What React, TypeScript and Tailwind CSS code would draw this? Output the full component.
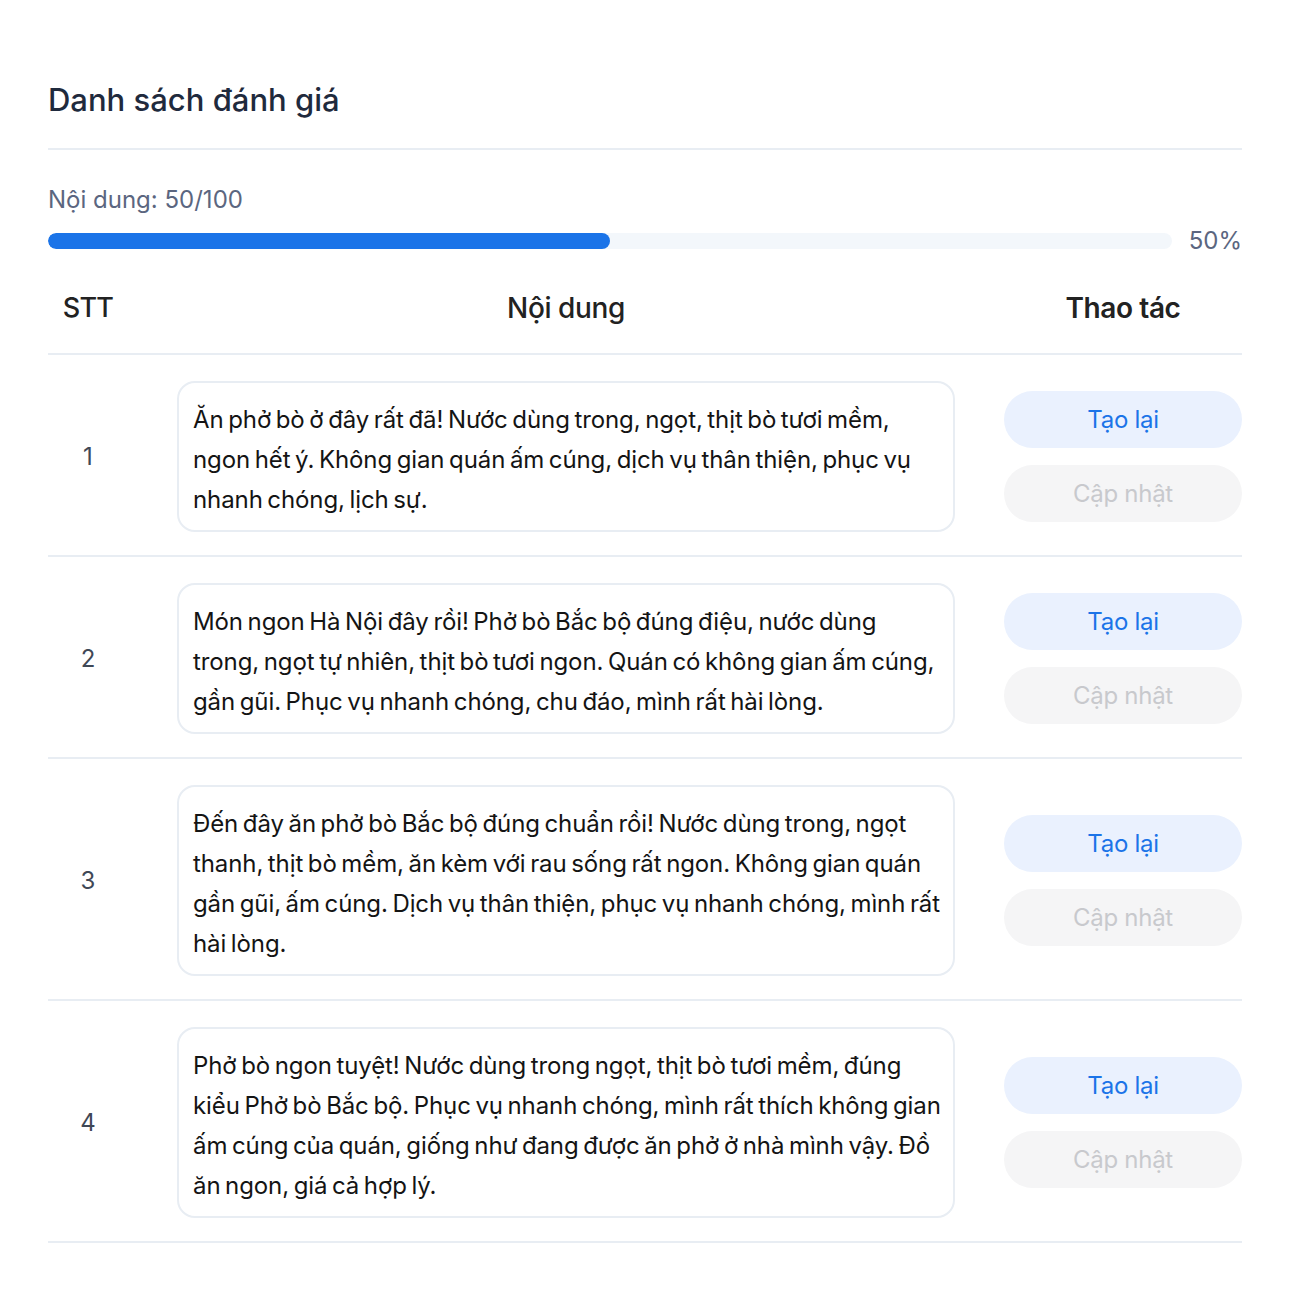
import React from "react";

// line breaks kept as in the design
const reviews = [
  [
    "Ăn phở bò ở đây rất đã! Nước dùng trong, ngọt, thịt bò tươi mềm,",
    "ngon hết ý. Không gian quán ấm cúng, dịch vụ thân thiện, phục vụ",
    "nhanh chóng, lịch sự.",
  ],
  [
    "Món ngon Hà Nội đây rồi! Phở bò Bắc bộ đúng điệu, nước dùng",
    "trong, ngọt tự nhiên, thịt bò tươi ngon. Quán có không gian ấm cúng,",
    "gần gũi. Phục vụ nhanh chóng, chu đáo, mình rất hài lòng.",
  ],
  [
    "Đến đây ăn phở bò Bắc bộ đúng chuẩn rồi! Nước dùng trong, ngọt",
    "thanh, thịt bò mềm, ăn kèm với rau sống rất ngon. Không gian quán",
    "gần gũi, ấm cúng. Dịch vụ thân thiện, phục vụ nhanh chóng, mình rất",
    "hài lòng.",
  ],
  [
    "Phở bò ngon tuyệt! Nước dùng trong ngọt, thịt bò tươi mềm, đúng",
    "kiểu Phở bò Bắc bộ. Phục vụ nhanh chóng, mình rất thích không gian",
    "ấm cúng của quán, giống như đang được ăn phở ở nhà mình vậy. Đồ",
    "ăn ngon, giá cả hợp lý.",
  ],
];

export default function App() {
  const progress = 50;
  return (
    <div className="min-h-screen bg-white font-['Inter','Noto_Sans',sans-serif] px-12 pt-[78px]">
      <h1 className="text-[31px] leading-[44px] font-medium text-[#1f2a3d] pb-[26px] border-b-2 border-[#e8edf3]">
        Danh sách đánh giá
      </h1>

      <div className="mt-[34px]">
        <p className="text-[24px] leading-[32px] text-[#5b6680]">Nội dung: 50/100</p>
        <div className="mt-[9px] flex items-center gap-[17px]">
          <div className="flex-1 h-4 rounded-full bg-[#f3f7fb] overflow-hidden">
            <div className="h-full rounded-full bg-[#1b74e8]" style={{ width: `${progress}%` }} />
          </div>
          <span className="text-[24px] leading-[32px] text-[#5b6680]">{progress}%</span>
        </div>
      </div>

      <div className="mt-[33px] grid grid-cols-[80px_778px_238px] gap-x-[49px] items-center pb-[27px] border-b-2 border-[#e8edf3] text-[28px] leading-[36px] font-medium text-[#222]">
        <div className="text-center text-[27px] tracking-[-0.8px]">STT</div>
        <div className="text-center tracking-[-0.4px]">Nội dung</div>
        <div className="text-center tracking-[-0.4px] font-semibold">Thao tác</div>
      </div>

      {reviews.map((lines, i) => (
        <div
          key={i}
          className="grid grid-cols-[80px_778px_238px] gap-x-[49px] items-center pt-[26px] pb-[23px] border-b-2 border-[#e8edf3]"
        >
          <div className="text-center text-[24px] text-[#3f4856]">{i + 1}</div>
          <div className="rounded-[18px] border-2 border-[#e8edf3] px-[14px] pt-[17px] pb-[10px] text-[24px] leading-[40px] text-[#141414] tracking-[-0.1px] [word-spacing:-2px]">
            {lines.map((l, j) => (
              <span key={j} className="block whitespace-nowrap">
                {l}
              </span>
            ))}
          </div>
          <div className="flex flex-col gap-[17px]">
            <button className="h-[57px] rounded-full bg-[#eaf1fe] text-[24px] text-[#1b74e8] tracking-[-0.3px]">
              Tạo lại
            </button>
            <button className="h-[57px] rounded-full bg-[#f5f5f6] text-[24px] text-[#c8c9cd] tracking-[-0.3px]">
              Cập nhật
            </button>
          </div>
        </div>
      ))}
    </div>
  );
}
